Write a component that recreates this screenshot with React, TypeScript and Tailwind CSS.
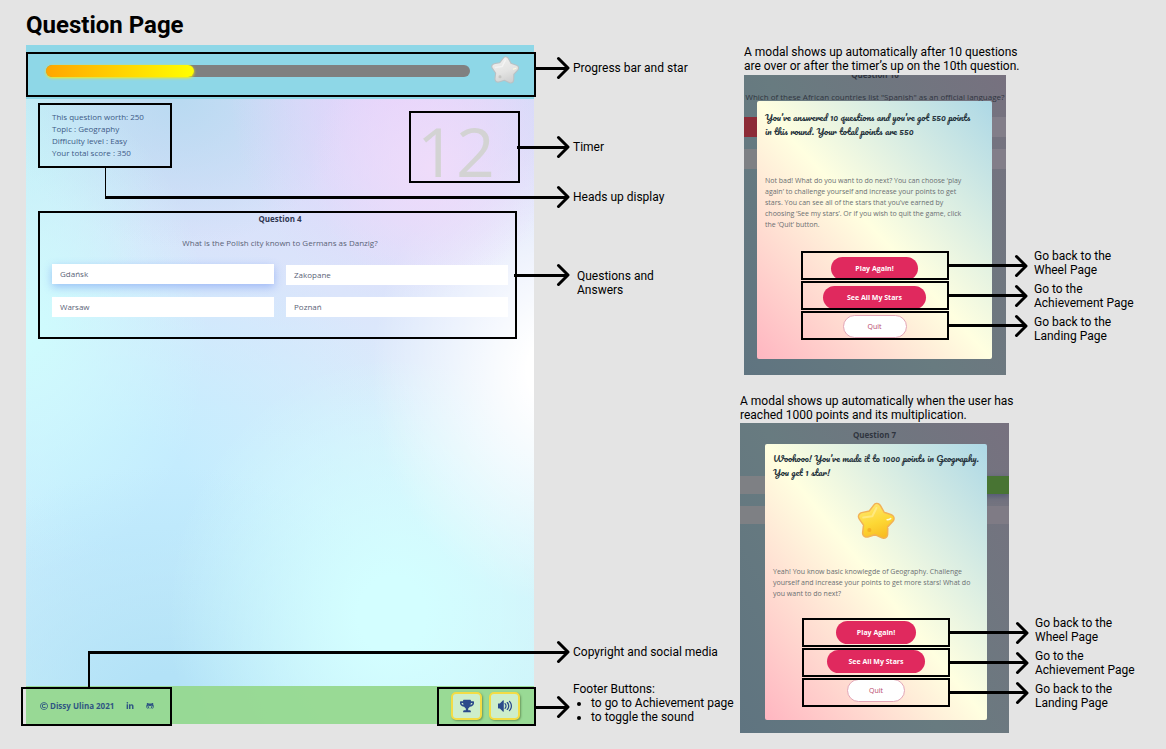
import React from "react";
import type { ReactNode } from "react";
import { FaGithubAlt, FaLinkedinIn, FaRegCopyright, FaTrophy } from "react-icons/fa";
import { ImVolumeHigh } from "react-icons/im";

const answers = [
  { text: "Gdańsk", active: true },
  { text: "Zakopane", active: false },
  { text: "Warsaw", active: false },
  { text: "Poznań", active: false },
];

const stats = [
  "This question worth: 250",
  "Topic : Geography",
  "Difficulty level : Easy",
  "Your total score : 350",
];

const STAR = "M20 6.5L25 14.1L33.8 16.5L28.1 23.6L28.5 32.7L20 29.5L11.5 32.7L11.9 23.6L6.2 16.5L15 14.1Z";

function Star({ tone, className }: { tone: "silver" | "gold"; className: string }) {
  const gold = tone === "gold";
  return (
    <svg viewBox="0 0 40 40" className={className} aria-hidden="true">
      <defs>
        <linearGradient id={`fill-${tone}`} gradientUnits="userSpaceOnUse" x1="12" y1="4" x2="26" y2="36">
          <stop offset="0" stopColor={gold ? "#ffe66c" : "#efefee"} />
          <stop offset="0.55" stopColor={gold ? "#fdd835" : "#e4e4e3"} />
          <stop offset="1" stopColor={gold ? "#f9bd22" : "#cfcfcf"} />
        </linearGradient>
      </defs>
      <g transform="rotate(4 20 20)" strokeLinejoin="round" strokeLinecap="round">
        <path d={STAR} fill="none" stroke={gold ? "#f2b254" : "#b9c2c5"} strokeWidth={9.5} />
        <path d={STAR} fill={`url(#fill-${tone})`} stroke={`url(#fill-${tone})`} strokeWidth={6.5} />
        <path
          d="M19.5 7L16 15.500L7 17.500"
          fill="none"
          stroke={gold ? "#fff0a0" : "#fafafa"}
          strokeWidth={2}
          opacity={0.6}
        />
        <path d="M31 18c1.500-.2 2.500-.7 3.500-1.500" fill="none" stroke="#fffbe0" strokeWidth={1.500} />
        <circle cx="14" cy="29.500" r="2" fill={gold ? "#f2a51c" : "#bcbcb8"} opacity={0.7} />
      </g>
    </svg>
  );
}

function Arrow({ className = "" }: { className?: string }) {
  return (
    <span className={`flex items-center ${className}`} aria-hidden="true">
      <span className="-mr-3 h-[3px] flex-1 bg-black" />
      <svg viewBox="0 0 14 24" className="h-6 w-3.5 shrink-0">
        <path
          d="M2.500 2.500L12 12L2.500 21.500"
          fill="none"
          stroke="#000"
          strokeWidth={3}
          strokeLinecap="round"
          strokeLinejoin="round"
        />
      </svg>
    </span>
  );
}

/* A note beside the game screen: an arrow ending right of the screen, then its label. */
function Callout({ className, children }: { className: string; children: ReactNode }) {
  return (
    <div
      className={`absolute -right-9 flex h-6 items-center font-[Roboto,sans-serif] text-xs leading-[14px] text-black ${className}`}
    >
      <Arrow className="flex-1" />
      <div className="absolute left-full pl-[3px] whitespace-nowrap">{children}</div>
    </div>
  );
}

function GameScreen() {
  return (
    <div className="relative flex flex-1 flex-col bg-[radial-gradient(ellipse_24%_18%_at_80%_18%,#efdcfa_0%,transparent_100%),radial-gradient(ellipse_34%_32%_at_74%_6%,#e6d2fb_0%,transparent_100%),radial-gradient(ellipse_36%_34%_at_104%_48%,#ffffff_15%,transparent_100%),radial-gradient(ellipse_44%_38%_at_72%_84%,#d3feff_15%,transparent_100%),radial-gradient(ellipse_56%_36%_at_28%_98%,#b3e2f7_15%,transparent_100%),radial-gradient(ellipse_36%_36%_at_0%_42%,#cffbfd_5%,transparent_100%),radial-gradient(ellipse_34%_22%_at_30%_8%,#b9daf1_0%,transparent_100%),radial-gradient(ellipse_26%_40%_at_0%_10%,#c3edf6_10%,transparent_100%),radial-gradient(ellipse_60%_40%_at_20%_66%,#c4ecfe_20%,transparent_100%),linear-gradient(180deg,#d4dcf8_0%,#dbe4fb_35%,#dceffb_60%,#cbf0f7_100%)] font-['Open_Sans',sans-serif]">
      <header className="relative flex items-start gap-5 bg-[#8ed7e7] pt-2.5 pr-3.5 pb-[14px] pl-5">
        <div
          role="progressbar"
          aria-label="Round progress"
          aria-valuenow={35}
          className="mt-2.5 h-3 flex-1 rounded-full bg-[#808080]"
        >
          <div className="h-3 w-[35%] rounded-full bg-linear-to-r from-[#ffa500] to-[#ffff00] shadow-[0_1px_3px_#ffee00]" />
        </div>
        <Star tone="silver" className="size-[30px]" />
        <div className="absolute top-[7px] -right-0.5 bottom-0.5 left-0 border-2 border-black" />
        <Callout className="top-[11px] left-full">Progress bar and star</Callout>
      </header>

      <main className="relative flex flex-1 flex-col pr-[17px] pl-3">
        <div className="flex items-start justify-between">
          <ul className="mt-1 w-[134px] border-2 border-black px-3 pt-1.5 pb-[7px] text-[8px] leading-3 font-medium text-[#3d5a86]">
            {stats.map((line) => (
              <li key={line}>{line}</li>
            ))}
          </ul>
          <div className="mt-3 -mr-[3px] flex h-[72px] w-[111px] items-center border-2 border-black pt-2 pl-1.5 text-[68px] leading-none text-[#d3d3d3]">
            12
          </div>
        </div>

        <section className="mt-7 border-2 border-black pr-[7px] pb-5 pl-3 text-[8px] leading-3 text-[#5b6377]">
          <h2 className="text-center font-bold text-[#2f3650]">Question 4</h2>
          <p className="mt-3 text-center">What is the Polish city known to Germans as Danzig?</p>
          <div className="mt-4 grid grid-cols-2 gap-3">
            {answers.map((answer) => (
              <button
                key={answer.text}
                type="button"
                className={`h-5 bg-white px-2 text-left ${
                  answer.active ? "-translate-y-px shadow-[0_3px_8px_rgba(90,130,240,0.45)]" : ""
                }`}
              >
                {answer.text}
              </button>
            ))}
          </div>
        </section>

        <Callout className="top-9 left-[calc(100%-17px)]">Timer</Callout>
        <div className="absolute top-[69px] left-[79px] h-[30px] w-px bg-black" />
        <Callout className="top-[86px] left-[79px]">Heads up display</Callout>
        <Callout className="top-[164px] left-[calc(100%-20px)]">
          <p className="pt-4 pl-1">
            Questions and
            <br />
            Answers
          </p>
        </Callout>
      </main>

      <footer className="relative flex h-[38px] items-center justify-between bg-[#96d88f]/95 px-3.5">
        <div className="flex items-center pt-0.5 text-[8px] leading-3 font-bold text-[#2f5583]">
          <FaRegCopyright className="mr-0.5 size-2" />
          <span>Dissy Ulina 2021</span>
          <a href="#linkedin" aria-label="LinkedIn" className="ml-3">
            <FaLinkedinIn className="size-2" />
          </a>
          <a href="#github" aria-label="GitHub" className="ml-3">
            <FaGithubAlt className="size-2" />
          </a>
        </div>
        <div className="flex gap-[7px] pt-0.5">
          <button
            type="button"
            aria-label="Achievements"
            className="flex h-7 w-[31px] items-center justify-center rounded-[5px] border-2 border-[#f3dc45] bg-[#cdeecb] text-[#2b4a8b] shadow-[1px_1px_2px_rgba(60,90,40,0.5)]"
          >
            <FaTrophy className="size-3.5" />
          </button>
          <button
            type="button"
            aria-label="Toggle sound"
            className="flex h-7 w-[31px] items-center justify-center rounded-[5px] border-2 border-[#f3dc45] bg-[#cdeecb] text-[#2b4a8b] shadow-[1px_1px_2px_rgba(60,90,40,0.5)]"
          >
            <ImVolumeHigh className="size-3.5" />
          </button>
        </div>
        <div className="absolute top-px -left-[5px] h-[39px] w-[151px] border-2 border-black" />
        <div className="absolute top-px -right-0.5 h-[39px] w-[99px] border-2 border-black" />
        <div className="absolute bottom-9 left-[62px] h-9 w-0.5 bg-black" />
        <Callout className="bottom-[60px] left-[62px]">Copyright and social media</Callout>
        <Callout className="top-[9px] left-full">
          <div className="-mt-2">
            <p>Footer Buttons:</p>
            <ul className="list-disc pl-[18px]">
              <li>to go to Achievement page</li>
              <li>to toggle the sound</li>
            </ul>
          </div>
        </Callout>
      </footer>
    </div>
  );
}

/* Frames, arrows and notes for the three buttons of a modal. */
function ActionNotes({ className }: { className: string }) {
  return (
    <div className={`absolute flex font-[Roboto,sans-serif] text-xs leading-[14px] text-black ${className}`}>
      <div className="flex flex-col gap-px pt-0.5">
        {["play", "stars", "quit"].map((id) => (
          <div key={id} className="flex items-center">
            <div className="h-[29px] w-[148px] border-2 border-black" />
            <Arrow className="w-[79px]" />
          </div>
        ))}
      </div>
      <div className="ml-1.5 flex flex-col gap-[5px] whitespace-nowrap">
        <p>
          Go back to the
          <br />
          Wheel Page
        </p>
        <p>
          Go to the
          <br />
          Achievement Page
        </p>
        <p>
          Go back to the
          <br />
          Landing Page
        </p>
      </div>
    </div>
  );
}

function ModalButtons({ padding }: { padding: string }) {
  return (
    <div className="flex flex-col items-center gap-1.5 text-[7px] leading-3 font-bold text-white">
      <button type="button" className={`h-[23px] rounded-full bg-[#e0295e] ${padding}`}>
        Play Again!
      </button>
      <button type="button" className={`h-[23px] rounded-full bg-[#e0295e] ${padding}`}>
        See All My Stars
      </button>
      <button
        type="button"
        className={`h-[23px] rounded-full border border-[#e3a5b6] bg-white font-normal text-[#b8476c] ${padding}`}
      >
        Quit
      </button>
    </div>
  );
}

const modalBox =
  "relative flex flex-col rounded-xs bg-[linear-gradient(to_top_right,#ffb6c1,#ffffe0,#add8e6)] px-2 text-[7px] leading-[11px] text-[#6b6f72]";
const modalTitle = "font-[Pacifico,cursive] text-[9px] leading-[14px] text-[#26333c]";
const backdrop =
  "absolute inset-0 overflow-hidden bg-[linear-gradient(60deg,#5f7480_0%,#687b80_45%,#77717f_100%)] text-center text-[8px] leading-3 text-[#30353f]";

export default function App() {
  return (
    <div className="grid min-h-screen grid-cols-[minmax(0,1fr)_206px_269px_157px] bg-[#e4e4e4] pl-[26px] font-[Roboto,sans-serif] text-black">
      <div className="flex flex-col pb-[25px]">
        <h1 className="pt-2.5 pb-[5px] text-2xl leading-[30px] font-bold">Question Page</h1>
        <GameScreen />
      </div>

      <div className="col-start-3 flex flex-col pt-[45px]">
        <section className="ml-1">
          <p className="pb-0.5 text-xs leading-[14px] whitespace-nowrap">
            A modal shows up automatically after 10 questions
            <br />
            are over or after the timer’s up on the 10th question.
          </p>
          <div className="relative mr-[3px] pt-[26px] pr-3.5 pb-4 pl-[13px] font-['Open_Sans',sans-serif]">
            <div className={backdrop}>
              <p className="-mt-1.5 font-bold">Question 10</p>
              <p className="mt-2.5 whitespace-nowrap">
                Which of these African countries list "Spanish" as an official language?
              </p>
              <div className="mt-3.5 grid grid-cols-2 gap-y-3">
                <span className="h-5 bg-[#8d2b36]" />
                <span className="h-5 bg-[#827e89]" />
                <span className="h-5 bg-[#7e8084]" />
                <span className="h-5 bg-[#827e89]" />
              </div>
            </div>
            <div role="dialog" aria-label="Round finished" className={`${modalBox} pt-[9px] pb-[21px]`}>
              <h3 className={modalTitle}>
                You’ve answered 10 questions and you’ve got 550 points
                <br />
                in this round. Your total points are 550
              </h3>
              <p className="mt-[37px] mb-[27px]">
                Not bad! What do you want to do next? You can choose ‘play
                <br />
                again’ to challenge yourself and increase your points to get
                <br />
                stars. You can see all of the stars that you’ve earned by
                <br />
                choosing ‘See my stars’. Or if you wish to quit the game, click
                <br />
                the ‘Quit’ button.
              </p>
              <ModalButtons padding="px-6" />
            </div>
            <ActionNotes className="bottom-8 left-[57px]" />
          </div>
        </section>

        <section className="mt-[19px]">
          <p className="pb-px text-xs leading-[14px] whitespace-nowrap">
            A modal shows up automatically when the user has
            <br />
            reached 1000 points and its multiplication.
          </p>
          <div className="relative pt-[21px] pr-[22px] pb-[13px] pl-[25px] font-['Open_Sans',sans-serif]">
            <div className={backdrop}>
              <p className="mt-1.5 font-bold">Question 7</p>
              <div className="mt-[35px] grid grid-cols-2 gap-y-3">
                <span className="h-[18px] bg-[#7e8084]" />
                <span className="h-[18px] bg-[#487433] shadow-[0_2px_6px_#4f5672]" />
                <span className="h-[18px] bg-[#7e8084]" />
                <span className="h-[18px] bg-[#7f7b85]" />
              </div>
            </div>
            <div role="dialog" aria-label="Star earned" className={`${modalBox} pt-[7px] pb-[18px]`}>
              <h3 className={modalTitle}>
                Woohooo! You’ve made it to 1000 points in Geography.
                <br />
                You get 1 star!
              </h3>
              <Star tone="gold" className="mt-[22px] size-10 self-center" />
              <p className="mt-[25px] mb-[22px]">
                Yeah! You know basic knowlegde of Geography. Challenge yourself and increase your points to get
                more stars! What do you want to do next?
              </p>
              <ModalButtons padding="px-[21px]" />
            </div>
            <ActionNotes className="bottom-[23px] left-[62px]" />
          </div>
        </section>
      </div>
    </div>
  );
}
